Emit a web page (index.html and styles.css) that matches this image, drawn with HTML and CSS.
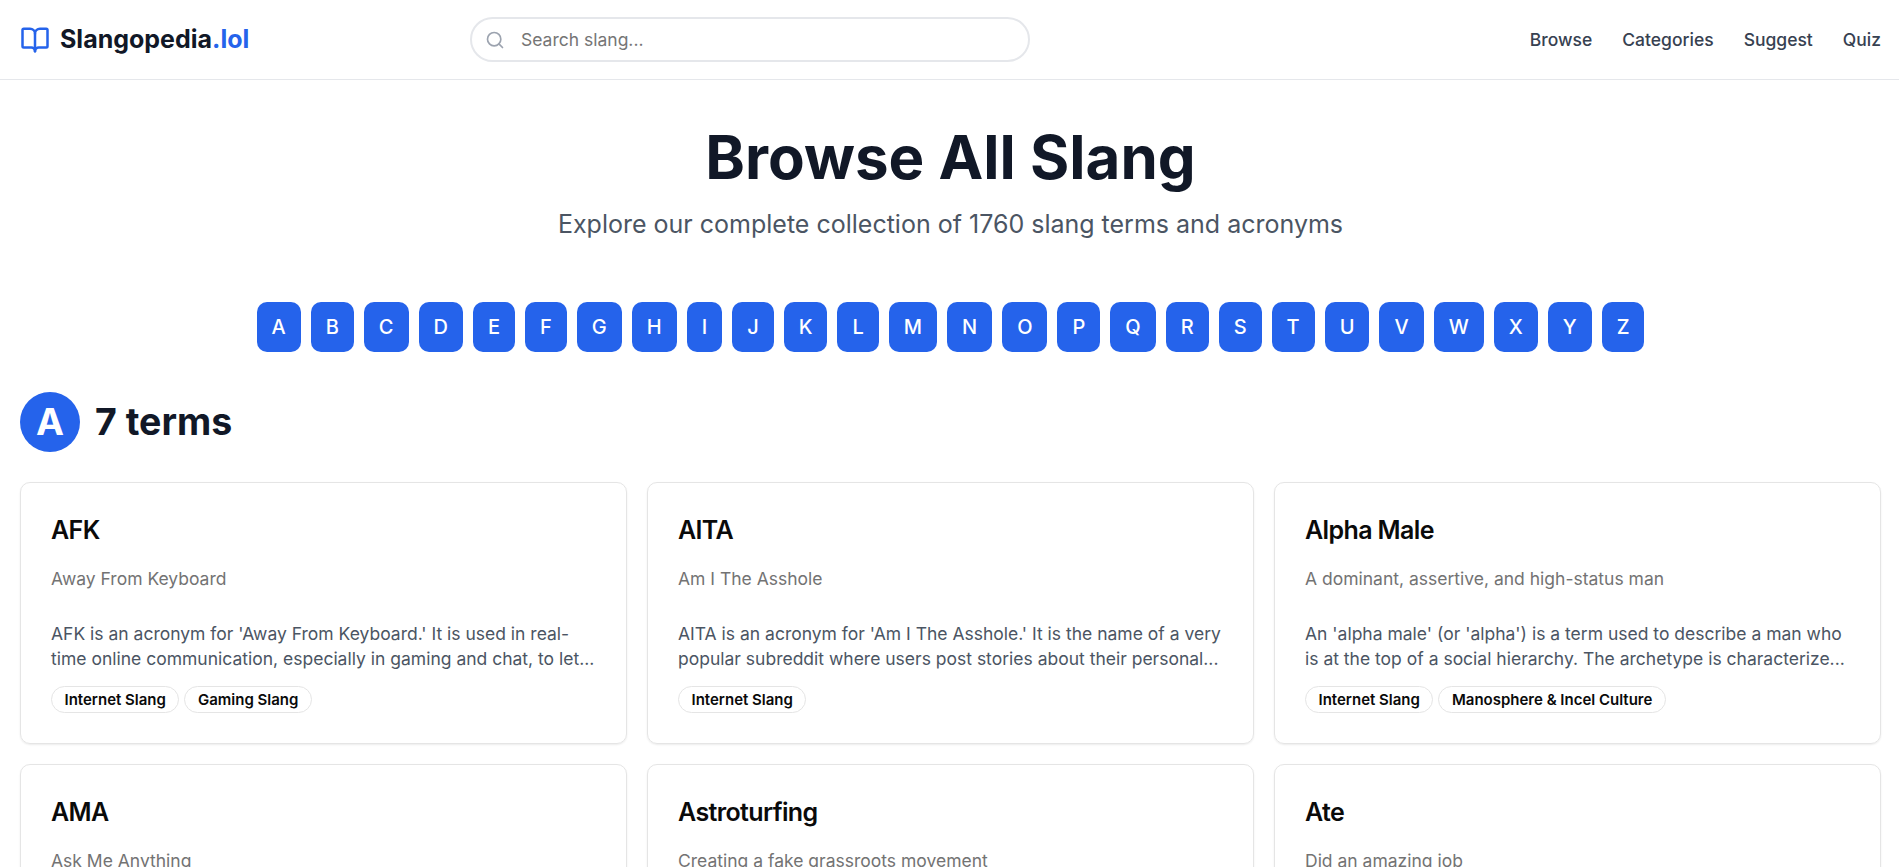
FILE: index.html
```html
<!DOCTYPE html>
<html lang="en">
<head>
<meta charset="utf-8">
<title>Browse All Slang - Slangopedia.lol</title>
<link rel="stylesheet" href="styles.css">
</head>
<body>
<header class="header">
  <a class="logo">
    <svg class="logo-icon" viewBox="0 0 24 24"><path d="M12 7v14"/><path d="M3 18a1 1 0 0 1-1-1V4a1 1 0 0 1 1-1h5a4 4 0 0 1 4 4 4 4 0 0 1 4-4h5a1 1 0 0 1 1 1v13a1 1 0 0 1-1 1h-6a3 3 0 0 0-3 3 3 3 0 0 0-3-3z"/></svg>
    <span>Slangopedia<span class="logo-tld">.lol</span></span>
  </a>
  <div class="search">
    <svg class="search-icon" viewBox="0 0 24 24"><circle cx="11" cy="11" r="8"/><path d="m21 21-4.3-4.3"/></svg>
    <span>Search slang...</span>
  </div>
  <nav class="nav"><a>Browse</a><a>Categories</a><a>Suggest</a><a>Quiz</a></nav>
</header>
<main class="main">
  <section class="hero">
    <h1>Browse All Slang</h1>
    <p>Explore our complete collection of 1760 slang terms and acronyms</p>
  </section>
  <div class="letters"><a>A</a><a>B</a><a>C</a><a>D</a><a>E</a><a>F</a><a>G</a><a>H</a><a>I</a><a>J</a><a>K</a><a>L</a><a>M</a><a>N</a><a>O</a><a>P</a><a>Q</a><a>R</a><a>S</a><a>T</a><a>U</a><a>V</a><a>W</a><a>X</a><a>Y</a><a>Z</a></div>
  <h2 class="section-title"><span class="section-letter">A</span>7 terms</h2>
  <div class="grid">
    <article class="card"><h3>AFK</h3><p class="sub">Away From Keyboard</p><p class="desc">AFK is an acronym for 'Away From Keyboard.' It is used in real-<br>time online communication, especially in gaming and chat, to let...</p><div class="tags"><span>Internet Slang</span><span>Gaming Slang</span></div></article>
    <article class="card"><h3>AITA</h3><p class="sub">Am I The Asshole</p><p class="desc">AITA is an acronym for 'Am I The Asshole.' It is the name of a very popular subreddit where users post stories about their personal...</p><div class="tags"><span>Internet Slang</span></div></article>
    <article class="card"><h3>Alpha Male</h3><p class="sub">A dominant, assertive, and high-status man</p><p class="desc">An 'alpha male' (or 'alpha') is a term used to describe a man who is at the top of a social hierarchy. The archetype is characterize...</p><div class="tags"><span>Internet Slang</span><span>Manosphere &amp; Incel Culture</span></div></article>
    <article class="card"><h3>AMA</h3><p class="sub">Ask Me Anything</p></article>
    <article class="card"><h3>Astroturfing</h3><p class="sub">Creating a fake grassroots movement</p></article>
    <article class="card"><h3>Ate</h3><p class="sub">Did an amazing job</p></article>
  </div>
</main>
</body>
</html>
```
FILE: styles.css
```css
* { box-sizing: border-box; margin: 0; padding: 0; }
html { overflow: hidden; }
body { font-family: Inter, "Liberation Sans", sans-serif; font-size: 16px; line-height: 24px; color: #0a0a0a; background: #fff; height: 867px; overflow: hidden; }
svg { fill: none; stroke: currentColor; stroke-width: 2; stroke-linecap: round; stroke-linejoin: round; flex: none; }
.header { display: flex; align-items: center; height: 80px; padding: 0 18px 0 20px; border-bottom: 1px solid #e5e7eb; }
.logo { display: flex; align-items: center; gap: 10px; width: 450px; font-size: 25px; line-height: 35px; font-weight: 700; color: #111827; }
.logo-icon { width: 30px; height: 30px; color: #2563eb; }
.logo-tld { color: #2563eb; }
.search { display: flex; align-items: center; gap: 16px; width: 560px; height: 45px; padding: 0 13px; border: 2px solid #e5e7eb; border-radius: 23px; color: #757575; font-size: 17.5px; }
.search-icon { width: 20px; height: 20px; color: #9ca3af; }
.nav { display: flex; gap: 30px; margin-left: auto; font-size: 17.5px; font-weight: 500; color: #374151; }
.main { padding: 47px 18px 0 20px; }
.hero { text-align: center; }
.hero h1 { font-size: 60px; line-height: 60px; font-weight: 700; color: #111827; }
.hero p { margin-top: 20px; font-size: 25px; line-height: 35px; color: #4b5563; }
.letters { display: flex; justify-content: center; gap: 10px; margin-top: 60px; }
.letters a { padding: 10px 15px; border-radius: 10px; background: #2563eb; color: #fff; font-size: 20px; line-height: 30px; font-weight: 500; }
.section-title { display: flex; align-items: center; gap: 15px; margin: 40px 0 30px; font-size: 37.5px; font-weight: 700; color: #111827; }
.section-letter { display: flex; align-items: center; justify-content: center; width: 60px; height: 60px; border-radius: 50%; background: #2563eb; color: #fff; }
.grid { display: grid; grid-template-columns: repeat(3, minmax(0, 1fr)); gap: 20px; }
.card { height: 262px; padding: 30px; border: 1px solid #e5e5e5; border-radius: 10px; box-shadow: 0 1px 2px rgb(0 0 0 / .08); }
.card h3 { font-size: 25px; line-height: 35px; font-weight: 600; letter-spacing: -.625px; }
.sub { margin-top: 18px; font-size: 17.5px; line-height: 25px; color: #737373; }
.desc { margin-top: 30px; font-size: 17.5px; line-height: 25px; color: #4b5563; }
.tags { display: flex; gap: 5px; margin-top: 15px; }
.tags span { padding: 2.5px 12.5px; border: 1px solid #e5e5e5; border-radius: 14px; font-size: 15px; line-height: 20px; font-weight: 600; }
```
